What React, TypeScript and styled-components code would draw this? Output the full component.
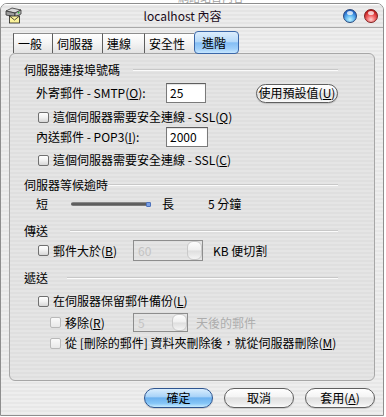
import React from "react";
import styled, { createGlobalStyle } from "styled-components";

const GlobalStyle = createGlobalStyle`
  html, body {
    margin: 0;
    padding: 0;
    background: #ffffff;
  }
  body {
    font-family: "Noto Sans CJK TC", "Noto Sans", sans-serif;
    font-size: 12px;
    color: #000;
  }
`;

const pinstripe = (a: string, b: string) =>
  `repeating-linear-gradient(to bottom, ${a} 0, ${a} 2px, ${b} 2px, ${b} 4px)`;

const Desktop = styled.div`
  width: 386px;
  height: 417px;
  overflow: hidden;
  background: #fff;
`;

const BehindStrip = styled.div`
  height: 3px;
  overflow: hidden;
  padding-left: 178px;
  color: #a0a0a0;
  font-size: 11px;
  line-height: 11px;

  span {
    display: block;
    margin-top: -8px;
  }
`;

const Window = styled.div`
  width: 382px;
  height: 411px;
  border: 1px solid #8e8e8e;
  border-radius: 7px 7px 0 0;
  overflow: hidden;
  display: flex;
  flex-direction: column;
  background: ${pinstripe("#eeeeee", "#e7e7e7")};
`;

const TitleBar = styled.div`
  height: 23px;
  flex: none;
  display: flex;
  align-items: center;
  padding: 0 5px 0 4px;
  border-bottom: 1px solid #a9a9a9;
  background: ${pinstripe("#ececec", "#e4e4e4")};
  box-shadow: inset 0 1px 0 #ffffff;
`;

const Title = styled.div`
  flex: 1;
  text-align: center;
  font-size: 12px;
  line-height: 16px;
  color: #1a0a1a;
`;

const Lights = styled.div`
  display: flex;
  gap: 7px;
`;

const Light = styled.span<{ $color: "blue" | "red" }>`
  position: relative;
  width: 12px;
  height: 12px;
  border-radius: 50%;
  border: 1px solid ${(p) => (p.$color === "blue" ? "#27487d" : "#7f1d1d")};
  background: ${(p) =>
    p.$color === "blue"
      ? "radial-gradient(circle at 50% 80%, #bff3ff 0%, #5fb4f0 40%, #2366c8 75%, #163f86 100%)"
      : "radial-gradient(circle at 50% 80%, #ffd0d0 0%, #f06060 40%, #c41f1f 75%, #8a1010 100%)"};

  &::after {
    content: "";
    position: absolute;
    left: 3px;
    top: 1px;
    width: 6px;
    height: 4px;
    border-radius: 50%;
    background: rgba(255, 255, 255, 0.75);
  }
`;

const Body = styled.div`
  flex: 1;
  display: flex;
  flex-direction: column;
  padding: 5px 8px 0 8px;
`;

const TabRow = styled.div`
  display: flex;
  align-items: flex-end;
  height: 20px;
  margin-left: 4px;
`;

const Tab = styled.div<{ $w: number; $active?: boolean }>`
  box-sizing: border-box;
  width: ${(p) => p.$w}px;
  height: ${(p) => (p.$active ? 23 : 20)}px;
  margin-bottom: ${(p) => (p.$active ? -1 : 0)}px;
  position: relative;
  z-index: ${(p) => (p.$active ? 2 : 1)};
  display: flex;
  align-items: center;
  padding-left: ${(p) => (p.$active ? 7 : 4)}px;
  font-size: 12px;
  line-height: 14px;
  border-top: 1px solid ${(p) => (p.$active ? "#3b67a8" : "#8d8d8d")};
  border-left: 1px solid ${(p) => (p.$active ? "#3b67a8" : "#5e5e5e")};
  border-right: ${(p) => (p.$active ? "1px solid #3b67a8" : "none")};
  border-bottom: ${(p) => (p.$active ? "1px solid #3b67a8" : "none")};
  border-radius: ${(p) => (p.$active ? "4px" : "0")};
  background: ${(p) =>
    p.$active
      ? "linear-gradient(to bottom, #dcedfd 0%, #b7daf9 45%, #85bef4 52%, #9fcffa 80%, #c6e6ff 100%)"
      : "linear-gradient(to bottom, #ffffff 0%, #f3f3f3 50%, #e2e2e2 100%)"};
`;

const Panel = styled.div`
  box-sizing: border-box;
  height: 328px;
  flex: none;
  display: flex;
  flex-direction: column;
  padding: 8px 36px 0 14px;
  border: 1px solid #a7a7a7;
  border-radius: 6px;
  background: ${pinstripe("#e5e5e5", "#dfdfdf")};
`;

const Header = styled.div<{ $mt: number; $gap: number }>`
  height: 16px;
  margin-top: ${(p) => p.$mt}px;
  display: flex;
  align-items: center;
  line-height: 16px;

  & > i {
    flex: 1;
    margin-left: ${(p) => p.$gap}px;
    border-top: 1px solid #c8c8c8;
    border-bottom: 1px solid #fbfbfb;
  }
`;

const Row = styled.div<{ $mt: number; $h?: number; $indent: number }>`
  height: ${(p) => p.$h ?? 16}px;
  margin-top: ${(p) => p.$mt}px;
  padding-left: ${(p) => p.$indent}px;
  display: flex;
  align-items: center;
  line-height: 16px;
  white-space: nowrap;
`;

const Label = styled.span<{ $w?: number; $dim?: boolean; $ml?: number }>`
  flex: none;
  width: ${(p) => (p.$w ? `${p.$w}px` : "auto")};
  margin-left: ${(p) => p.$ml ?? 0}px;
  color: ${(p) => (p.$dim ? "#adadad" : "#000")};
`;

const Check = styled.span<{ $disabled?: boolean }>`
  box-sizing: border-box;
  flex: none;
  width: 11px;
  height: 11px;
  margin-right: 4px;
  border-radius: 2px;
  border: 1px solid ${(p) => (p.$disabled ? "#b9b9b9" : "#707070")};
  background: ${(p) =>
    p.$disabled
      ? "linear-gradient(to bottom, #fafafa, #e8e8e8)"
      : "linear-gradient(to bottom, #ffffff 0%, #f1f1f1 50%, #d6d6d6 100%)"};
`;

const TextField = styled.div<{ $w: number }>`
  box-sizing: border-box;
  width: ${(p) => p.$w}px;
  height: 20px;
  padding-left: 3px;
  display: flex;
  align-items: center;
  border: 1px solid #7a7a7a;
  border-top-color: #5e5e5e;
  background: #ffffff;
  box-shadow: inset 0 1px 1px rgba(0, 0, 0, 0.12);
  font-size: 12px;
`;

const SpinBox = styled.div<{ $w: number; $h: number }>`
  box-sizing: border-box;
  flex: none;
  width: ${(p) => p.$w}px;
  height: ${(p) => p.$h}px;
  display: flex;
  align-items: center;
  padding: 0 0 0 4px;
  border: 1px solid #8d8d8d;
  color: #c3c3c3;
  background: transparent;

  & > b {
    font-weight: normal;
    flex: 1;
  }
`;

const Stepper = styled.span`
  box-sizing: border-box;
  width: 15px;
  height: 100%;
  border: 1px solid #c9c9c9;
  border-radius: 6px;
  background: linear-gradient(to bottom, #fdfdfd 0%, #efefef 48%, #dedede 52%, #f4f4f4 100%);
`;

const Track = styled.span`
  position: relative;
  flex: none;
  width: 80px;
  height: 4px;
  margin: 0 11px 0 23px;
  border-radius: 2px;
  background: linear-gradient(to bottom, #9a9a9a 0%, #4c4c4c 50%, #8a8a8a 100%);

  &::after {
    content: "";
    position: absolute;
    right: 0;
    top: 0;
    width: 3px;
    height: 3px;
    border-radius: 1px;
    background: #7aa0e4;
    border: 1px solid #4d72bd;
  }
`;

const Pill = styled.div<{ $w: number; $h?: number; $primary?: boolean; $ml?: number }>`
  box-sizing: border-box;
  flex: none;
  width: ${(p) => p.$w}px;
  height: ${(p) => p.$h ?? 20}px;
  margin-left: ${(p) => p.$ml ?? 0}px;
  display: flex;
  align-items: center;
  justify-content: center;
  border-radius: 10px;
  border: 1px solid ${(p) => (p.$primary ? "#2f5590" : "#5f5f5f")};
  background: ${(p) =>
    p.$primary
      ? "linear-gradient(to bottom, #d9eefe 0%, #a9d3f8 42%, #6cb1ef 50%, #86c6f7 80%, #c8ecff 100%)"
      : "linear-gradient(to bottom, #ffffff 0%, #f4f4f4 42%, #e0e0e0 50%, #ececec 80%, #fbfbfb 100%)"};
  box-shadow: 0 1px 1px rgba(0, 0, 0, 0.15);
  font-size: 12px;
  line-height: 14px;
`;

const ButtonRow = styled.div`
  display: flex;
  justify-content: flex-end;
  gap: 11px;
  margin-top: 7px;
`;

const MailServerIcon = () => (
  <svg width="17" height="17" viewBox="0 0 17 17">
    <path d="M1 4 L7 1 L16 3 L10 6 Z" fill="#d8d8d8" stroke="#333" strokeWidth="0.8" />
    <path d="M1 4 L1 8 L10 10 L10 6 Z" fill="#9c9c9c" stroke="#333" strokeWidth="0.8" />
    <path d="M10 6 L16 3 L16 7 L10 10 Z" fill="#bdbdbd" stroke="#333" strokeWidth="0.8" />
    <circle cx="13.6" cy="5.6" r="0.9" fill="#2ec43a" />
    <rect x="4.5" y="9" width="10" height="7" fill="#fbf29a" stroke="#222" strokeWidth="0.8" />
    <path d="M4.5 9 L9.5 13 L14.5 9" fill="none" stroke="#222" strokeWidth="0.8" />
  </svg>
);

const App = () => {
  return (
    <Desktop>
      <GlobalStyle />
      <BehindStrip>
        <span>網路站台內容</span>
      </BehindStrip>
      <Window>
        <TitleBar>
          <MailServerIcon />
          <Title>localhost 內容</Title>
          <Lights>
            <Light $color="blue" />
            <Light $color="red" />
          </Lights>
        </TitleBar>
        <Body>
          <TabRow>
            <Tab $w={39}>一般</Tab>
            <Tab $w={50}>伺服器</Tab>
            <Tab $w={42}>連線</Tab>
            <Tab $w={50}>安全性</Tab>
            <Tab $w={45} $active>
              進階
            </Tab>
          </TabRow>
          <Panel>
            <Header $mt={0} $gap={13}>
              伺服器連接埠號碼
              <i />
            </Header>
            <Row $mt={5} $h={20} $indent={12}>
              <Label $w={130}>
                外寄郵件 - SMTP(<u>O</u>):
              </Label>
              <TextField $w={42}>25</TextField>
              <Pill $w={82} $h={19} $ml={50}>
                使用預設值(<u>U</u>)
              </Pill>
            </Row>
            <Row $mt={6} $indent={14}>
              <Check />
              <Label>
                這個伺服器需要安全連線 - SSL(<u>Q</u>)
              </Label>
            </Row>
            <Row $mt={2} $h={20} $indent={12}>
              <Label $w={130}>
                內送郵件 - POP3(<u>I</u>):
              </Label>
              <TextField $w={42}>2000</TextField>
            </Row>
            <Row $mt={5} $indent={14}>
              <Check />
              <Label>
                這個伺服器需要安全連線 - SSL(<u>C</u>)
              </Label>
            </Row>

            <Header $mt={9} $gap={0}>
              伺服器等候逾時
              <i />
            </Header>
            <Row $mt={3} $indent={12}>
              <Label>短</Label>
              <Track />
              <Label $w={46}>長</Label>
              <Label>5 分鐘</Label>
            </Row>

            <Header $mt={11} $gap={22}>
              傳送
              <i />
            </Header>
            <Row $mt={1} $h={21} $indent={14}>
              <Check />
              <Label $w={80}>
                郵件大於(<u>B</u>)
              </Label>
              <SpinBox $w={70} $h={21}>
                <b>60</b>
                <Stepper />
              </SpinBox>
              <Label $ml={10}>KB 便切割</Label>
            </Row>

            <Header $mt={9} $gap={19}>
              遞送
              <i />
            </Header>
            <Row $mt={7} $indent={14}>
              <Check />
              <Label>
                在伺服器保留郵件備份(<u>L</u>)
              </Label>
            </Row>
            <Row $mt={4} $h={19} $indent={26}>
              <Check $disabled />
              <Label $w={68}>
                移除(<u>R</u>)
              </Label>
              <SpinBox $w={55} $h={19}>
                <b>5</b>
                <Stepper />
              </SpinBox>
              <Label $dim $ml={8}>
                天後的郵件
              </Label>
            </Row>
            <Row $mt={3} $indent={26}>
              <Check $disabled />
              <Label>
                從 [刪除的郵件] 資料夾刪除後，就從伺服器刪除(<u>M</u>)
              </Label>
            </Row>
          </Panel>
          <ButtonRow>
            <Pill $w={69} $primary>
              確定
            </Pill>
            <Pill $w={70}>取消</Pill>
            <Pill $w={70}>
              套用(<u>A</u>)
            </Pill>
          </ButtonRow>
        </Body>
      </Window>
    </Desktop>
  );
};

export default App;
